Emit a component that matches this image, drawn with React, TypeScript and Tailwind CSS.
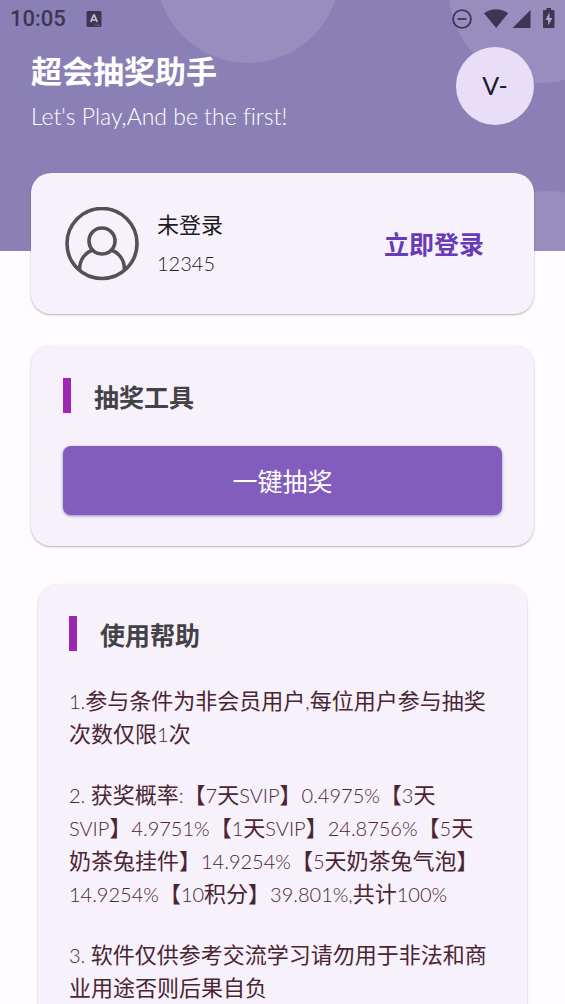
import type { ReactNode } from "react";

function StatusBar() {
  return (
    <div className="flex h-[38px] items-center justify-between px-[10px] font-['Roboto',sans-serif] text-[#3d3652]">
      <div className="flex items-center gap-5">
        <span className="text-[22px] leading-[38px] font-medium">10:05</span>
        <svg className="h-4 w-4" viewBox="0 0 16 16" aria-hidden="true">
          <rect x="0.5" y="0" width="15" height="16" rx="1.5" fill="#3d3652" />
          <path d="M4.7 11 7.7 4.2h.6L11.3 11M5.9 9h4.2" fill="none" stroke="#c3bcdc" strokeWidth="1.7" />
          <path d="M8.5 14.2h5.5" stroke="#8b80b5" strokeWidth="1" strokeDasharray="1 0.7" />
        </svg>
      </div>
      <svg className="h-6 w-[104px]" viewBox="0 0 104 24" aria-hidden="true">
        <circle cx="11" cy="12" r="8.9" fill="none" stroke="#3d3652" strokeWidth="1.8" />
        <path d="M6.5 12h9" stroke="#3d3652" strokeWidth="1.8" />
        <path d="M33 6.3Q45 -2 57.2 6.3L45.2 21Z" fill="#3d3652" />
        <path d="M61.5 21 79.5 3V21Z" fill="#3d3652" />
        <path d="M93 3h2.5V1h4.5v2h2.5q1 0 1 1v16q0 1-1 1h-9.5q-1 0-1-1V4q0-1 1-1Z" fill="#3d3652" />
        <path d="M98.5 5.5 94.5 13H97.2V18.5L101.3 11H98.5Z" fill="#b0a7cf" />
      </svg>
    </div>
  );
}

function UserIcon() {
  return (
    <svg className="h-[74px] w-[74px] shrink-0" viewBox="0 0 74 74" fill="none" stroke="#555055" strokeWidth="3.6" aria-hidden="true">
      <circle cx="37" cy="36.5" r="35" />
      <circle cx="37" cy="34" r="13" />
      <path d="M14.5 63C14.5 53.5 19.5 46 28 43M59.5 63C59.5 53.5 54.5 46 46 43" />
    </svg>
  );
}

const card = "rounded-[20px] bg-[#f6f1fb] shadow-[0_1px_2px_rgba(0,0,0,0.3)]";

function SectionTitle({ children }: { children: ReactNode }) {
  return (
    <div className="flex gap-[23px]">
      <span className="w-2 bg-[#9c27b0]" />
      <h2 className="pt-1 text-[25px] leading-[31px] font-bold text-[#444246]">{children}</h2>
    </div>
  );
}

/* Latin letters and digits are set slightly smaller than the Chinese text around them. */
function MixedText({ text }: { text: string }) {
  return text
    .split(/([\x20-\x7e]+)/)
    .filter(Boolean)
    .map((run, i) =>
      /^[\x20-\x7e]/.test(run) ? (
        <span key={i} className="text-[20px] leading-none font-light">
          {run}
        </span>
      ) : (
        run
      ),
    );
}

const help: string[][] = [
  ["1.参与条件为非会员用户,每位用户参与抽奖", "次数仅限1次"],
  [
    "2. 获奖概率:【7天SVIP】0.4975%【3天",
    "SVIP】4.9751%【1天SVIP】24.8756%【5天",
    "奶茶兔挂件】14.9254%【5天奶茶兔气泡】",
    "14.9254%【10积分】39.801%,共计100%",
  ],
  ["3. 软件仅供参考交流学习请勿用于非法和商", "业用途否则后果自负"],
];

export default function App() {
  return (
    <div
      lang="zh-CN"
      className="h-screen overflow-y-auto bg-[#fffbfe] font-['Lato','Noto_Sans_CJK_SC',sans-serif] [font-variant-ligatures:none] [scrollbar-width:none]"
    >
      <header className="relative overflow-hidden bg-[#8b80b5] pb-[122px]">
        <div className="absolute -top-[121px] left-[156px] size-[184px] rounded-full bg-[#988dbd]" />
        <div className="absolute -top-[101px] -right-[68px] size-[184px] rounded-full bg-[#988dbd]" />
        <div className="absolute top-[191px] -right-[75px] size-[184px] rounded-full bg-[#988dbd]" />
        <div className="relative">
          <StatusBar />
          <div className="flex items-start justify-between px-[31px] pt-[9px]">
            <div className="pt-1 text-white">
              <h1 className="text-[31px] leading-[40px] font-bold">超会抽奖助手</h1>
              <p className="mt-3 text-[23px] leading-[26px] font-light">Let's Play,And be the first!</p>
            </div>
            <button className="size-[78px] rounded-full bg-[#e8def8] text-[25px] text-[#1d192b]">V-</button>
          </div>
        </div>
      </header>

      <main className="relative -mt-[78px] px-[31px] pb-8">
        <section className={`${card} flex h-[141px] items-center pr-[50px] pl-[34px]`}>
          <UserIcon />
          <div className="ml-[18px] flex-1 text-[22px] leading-[38px] text-[#1c1b1f]">
            <p>未登录</p>
            <p className="text-[20px] font-light">12345</p>
          </div>
          <button className="pt-[3px] text-[25px] font-bold text-[#673ab7]">立即登录</button>
        </section>

        <section className={`${card} mt-[31px] px-8 pt-[33px] pb-[31px]`}>
          <SectionTitle>抽奖工具</SectionTitle>
          <button className="mt-[33px] h-[69px] w-full rounded-lg bg-[#825dbd] pt-0.5 text-[25px] text-white shadow-[0_1px_3px_rgba(60,30,110,0.5)]">
            一键抽奖
          </button>
        </section>

        <section className={`${card} mx-[7px] mt-[38px] px-[31px] pt-8 pb-8`}>
          <SectionTitle>使用帮助</SectionTitle>
          <div className="mt-[33px] flex flex-col gap-7 text-[22px] leading-[33px] whitespace-nowrap text-[#4a2532]">
            {help.map((lines) => (
              <p key={lines[0]}>
                {lines.map((line) => (
                  <span key={line} className="block">
                    <MixedText text={line} />
                  </span>
                ))}
              </p>
            ))}
          </div>
        </section>
      </main>
    </div>
  );
}
